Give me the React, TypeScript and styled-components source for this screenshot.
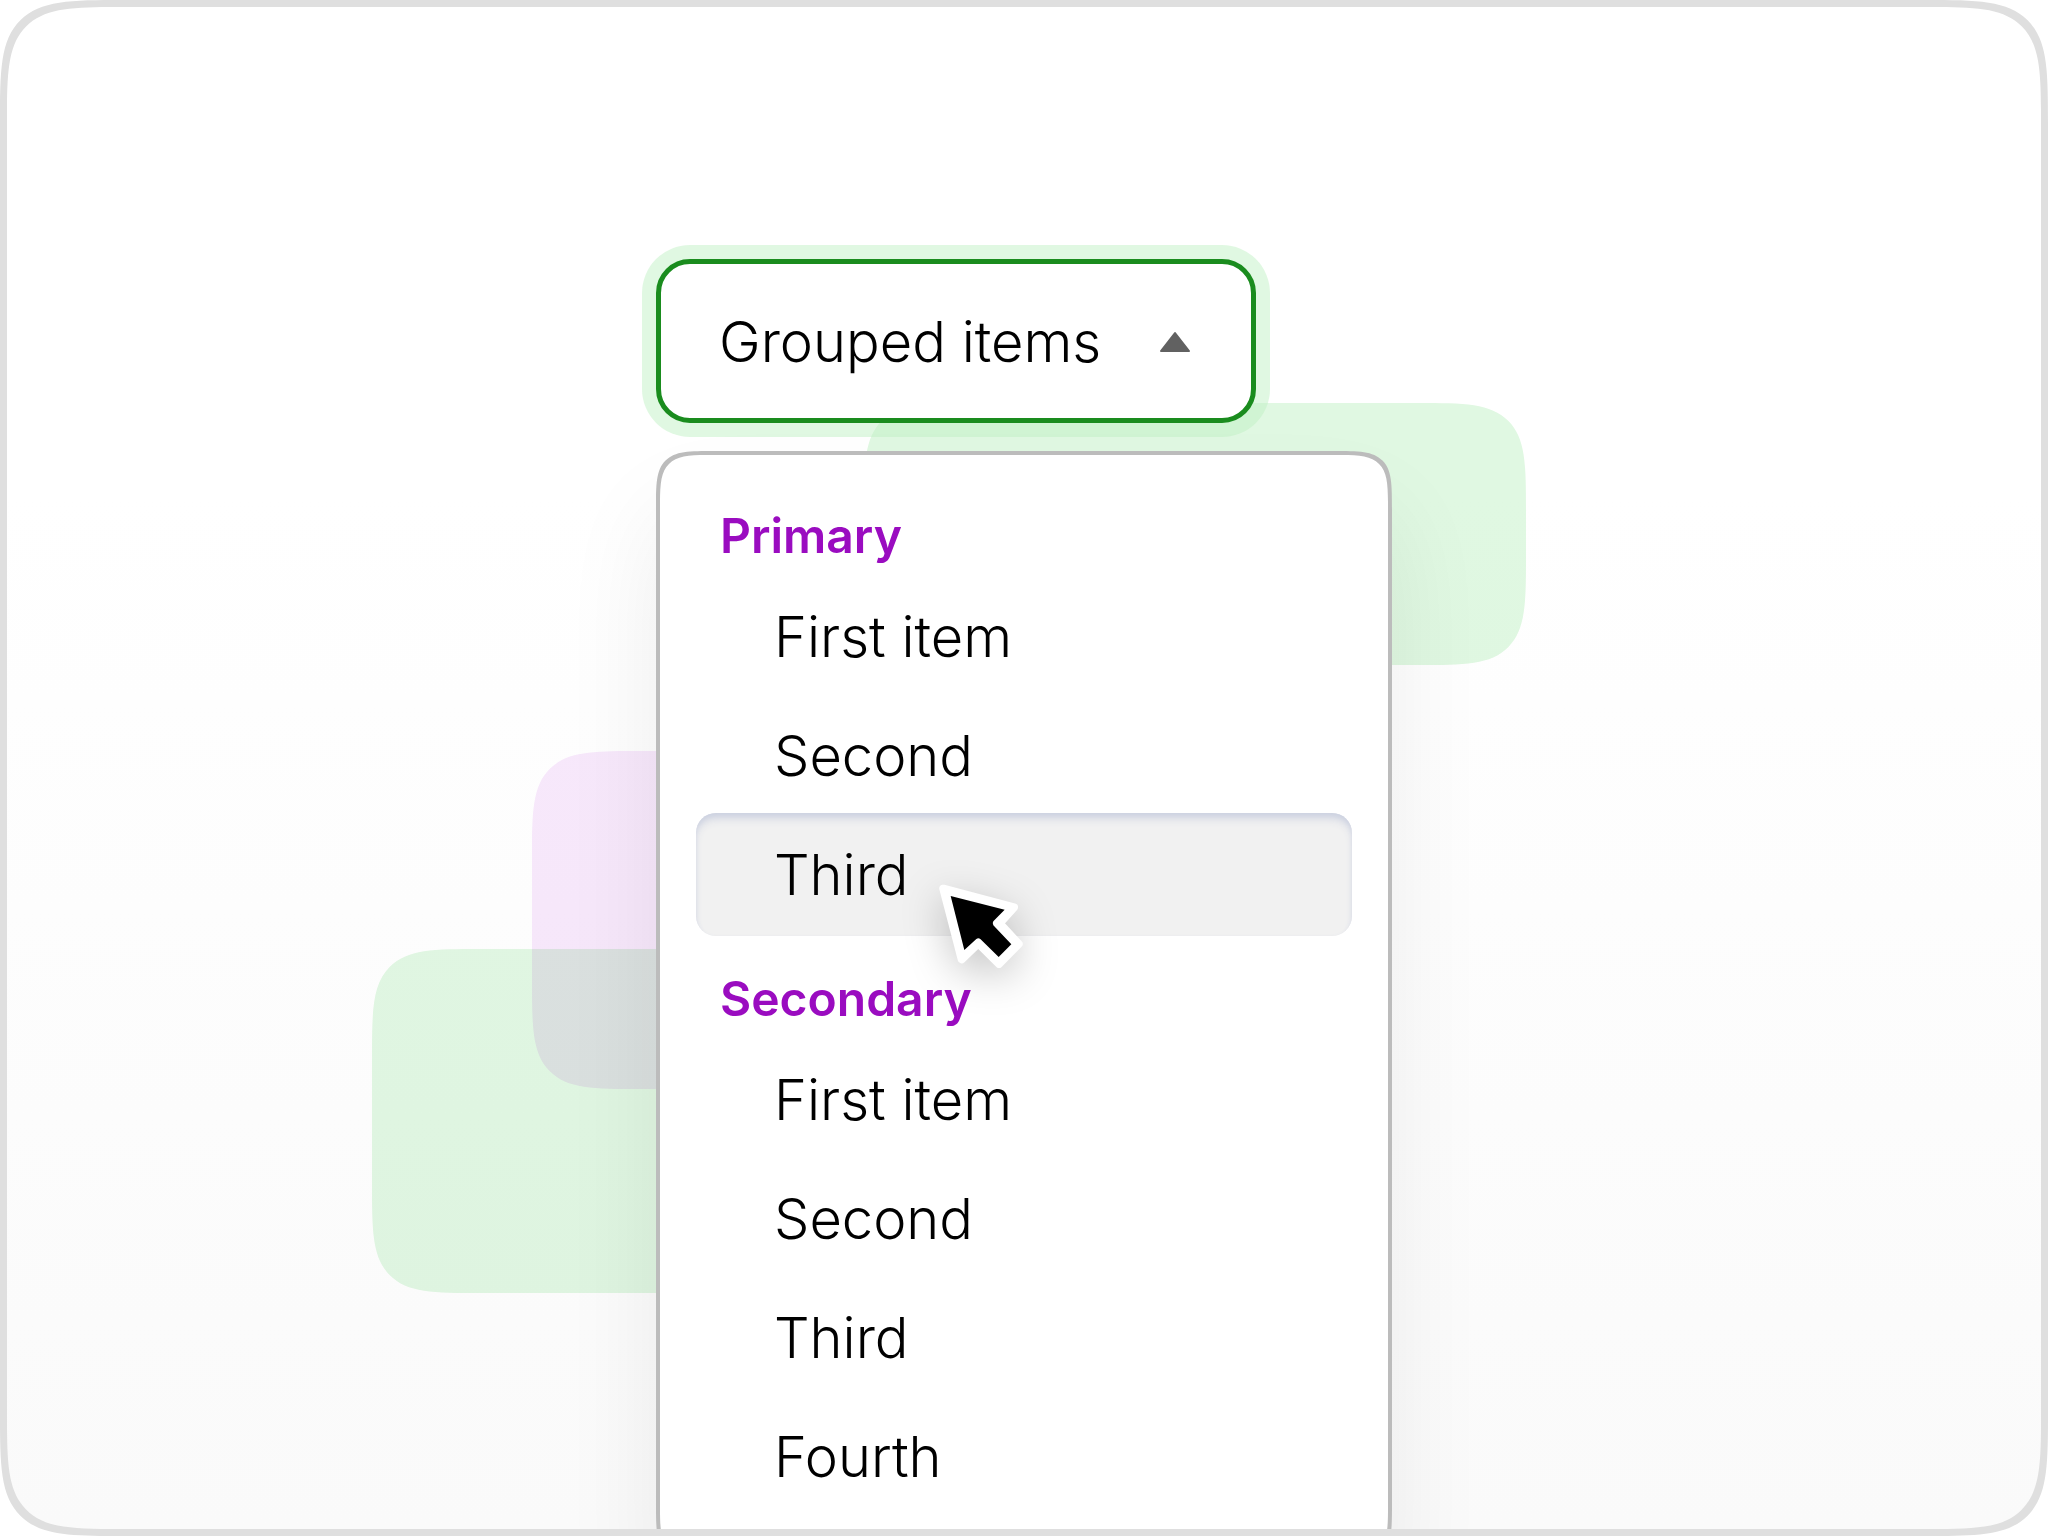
import React from "react";
import styled, { createGlobalStyle } from "styled-components";

const GlobalStyle = createGlobalStyle`
  *, *::before, *::after { box-sizing: border-box; }
  body { margin: 0; background: #ffffff; }
`;

const Frame = styled.main`
  position: relative;
  height: 100vh;
  overflow: hidden;
  border: 7px solid #dfdfdf;
  border-radius: 128px;
  corner-shape: squircle;
  background: linear-gradient(#ffffff 32%, #fafafa 100%);
  font-family: Inter, "Liberation Sans", sans-serif;
  color: #000000;
  display: flex;
  justify-content: center;
  padding-top: 252px;
`;

const Blob = styled.div<{ $x: number; $y: number; $w: number; $h: number; $color: string }>`
  position: absolute;
  left: calc(50% + ${(p) => p.$x}px);
  top: ${(p) => p.$y}px;
  width: ${(p) => p.$w}px;
  height: ${(p) => p.$h}px;
  border-radius: 112px;
  corner-shape: squircle;
  background: ${(p) => p.$color};
  mix-blend-mode: multiply;
`;

const Dropdown = styled.div`
  position: relative;
  width: 736px;
  display: flex;
  flex-direction: column;
  align-items: flex-start;
  gap: 28px;
`;

const Trigger = styled.button`
  display: flex;
  flex: none;
  align-items: center;
  justify-content: space-between;
  width: 600px;
  height: 164px;
  padding: 2px 60px 0 58px;
  border: 5px solid #1a8c1e;
  border-radius: 34px;
  background: #ffffff;
  box-shadow: 0 0 0 14px rgba(189, 240, 193, 0.47);
  font: 300 56px/72px Inter, "Liberation Sans", sans-serif;
  color: inherit;
`;

const Menu = styled.div`
  display: flex;
  flex: none;
  flex-direction: column;
  gap: 20px;
  width: 100%;
  padding: 34px 36px 44px;
  border: 4px solid #bcbcbc;
  border-radius: 60px;
  corner-shape: squircle;
  background: #ffffff;
  box-shadow: 0 60px 100px rgba(0, 0, 0, 0.07);
`;

const Group = styled.div`
  display: flex;
  flex-direction: column;
`;

const GroupTitle = styled.h2`
  margin: 0;
  padding: 15px 24px 7px;
  font-size: 48px;
  font-weight: 600;
  line-height: 64px;
  color: #9a0cc0;
`;

const Item = styled.button<{ $active?: boolean }>`
  height: 123px;
  margin: 0 0 -4px;
  padding: 0 78px;
  border: 0;
  border-radius: 20px;
  background: ${(p) => (p.$active ? "#f1f1f1" : "transparent")};
  box-shadow: ${(p) => (p.$active ? "inset 0 8px 10px -3px #ccd1e0, inset 0 2px 4px #dcdfe9" : "none")};
  font: 300 56px/72px Inter, "Liberation Sans", sans-serif;
  text-align: left;
  color: inherit;
`;

const Cursor = styled.svg`
  position: absolute;
  left: 244px;
  top: 601px;
  width: 160px;
  height: 140px;
  overflow: visible;
  pointer-events: none;
  filter: drop-shadow(0 12px 20px rgba(0, 0, 0, 0.22));
`;

const groups = [
  { title: "Primary", items: ["First item", "Second", "Third"] },
  { title: "Secondary", items: ["First item", "Second", "Third", "Fourth"] },
];

export default function App() {
  return (
    <>
      <GlobalStyle />
      <Frame>
        <Blob $x={-160} $y={396} $w={662} $h={262} $color="#e0f8e2" />
        <Blob $x={-492} $y={744} $w={400} $h={338} $color="#f8e9fc" />
        <Blob $x={-652} $y={942} $w={500} $h={344} $color="#e2f8e4" />
        <Dropdown>
          <Trigger type="button" aria-haspopup="menu" aria-expanded="true">
            Grouped items
            <svg width="32" height="22" viewBox="0 0 32 22" aria-hidden="true">
              <path d="M16 2 30 20H2Z" fill="#616161" stroke="#616161" strokeWidth="2" strokeLinejoin="round" />
            </svg>
          </Trigger>
          <Menu role="menu">
            {groups.map((group, g) => (
              <Group key={group.title} role="group" aria-label={group.title}>
                <GroupTitle>{group.title}</GroupTitle>
                {group.items.map((item, i) => (
                  <Item key={item} type="button" role="menuitem" $active={g === 0 && i === 2}>
                    {item}
                  </Item>
                ))}
              </Group>
            ))}
          </Menu>
          <Cursor viewBox="0 0 480 420" aria-hidden="true">
            <path
              d="M130 86 342 142 299 190 356 252 297 312 235 250 185 298Z"
              fill="#fff"
              stroke="#fff"
              strokeWidth="24"
              strokeLinejoin="round"
            />
            <path d="M152 108 314 149 280 184Q276 190 280 196L334 253 296 291 241 237Q235 232 229 237L193 270Z" fill="#000" />
          </Cursor>
        </Dropdown>
      </Frame>
    </>
  );
}
